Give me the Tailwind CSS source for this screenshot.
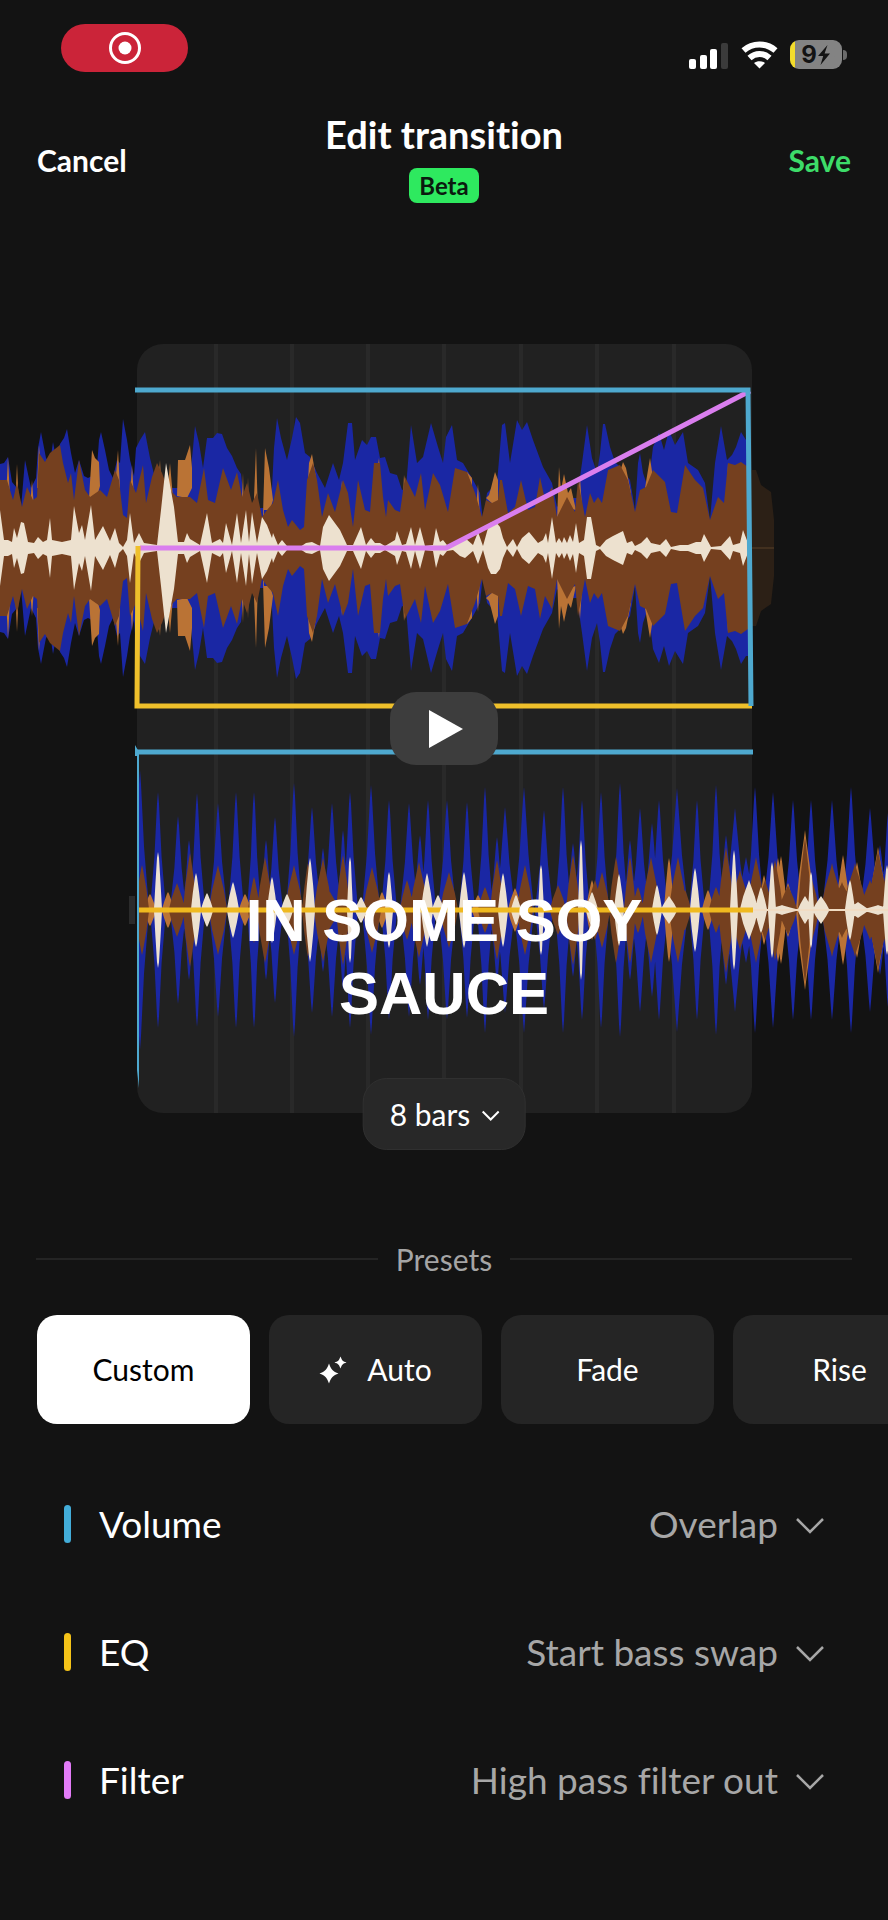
<!DOCTYPE html>
<html lang="en">
<head>
  <meta charset="UTF-8" />
  <meta name="viewport" content="width=device-width, initial-scale=1.0"/>
  <title>Edit transition</title>
  <script src="https://cdn.jsdelivr.net/npm/@tailwindcss/browser@4"></script>
</head>
<body class="min-h-screen overflow-x-hidden bg-[#131313] font-['Lato',sans-serif] text-white [font-variant-ligatures:none]">

  <!-- Status bar -->
  <div class="flex h-24 items-start justify-between pl-[61px] pr-[41px] pt-6">
    <div class="flex h-12 w-[127px] items-center justify-center rounded-full bg-[#cb2439]">
      <svg class="size-8" viewBox="0 0 32 32" fill="none">
        <circle cx="16" cy="16" r="14.5" stroke="#fff" stroke-width="3"/>
        <circle cx="16" cy="16" r="6.5" fill="#fff"/>
      </svg>
    </div>
    <div class="flex items-center gap-3 pt-4">
      <svg class="h-7 w-10" viewBox="0 0 40 28" fill="#fff">
        <rect x="0" y="18" width="7" height="10" rx="2"/>
        <rect x="11" y="14" width="7" height="14" rx="2"/>
        <rect x="21" y="8" width="7" height="20" rx="2"/>
        <rect x="32" y="2" width="7" height="26" rx="2" fill="#3b3b3b"/>
      </svg>
      <svg class="h-7 w-[37px]" viewBox="0 0 37 28" fill="none" stroke="#fff" stroke-width="6">
        <path d="M2.500 9.500C11.500 1.500 25.500 1.500 34.500 9.500"/>
        <path d="M8.500 17C14.500 11.500 22.500 11.500 28.500 17"/>
        <path d="M18.500 27.500L13 22C16.200 19.500 20.800 19.500 24 22Z" fill="#fff" stroke="none"/>
      </svg>
      <div class="flex items-center gap-px">
        <div class="flex h-[29px] w-[52px] items-center justify-center overflow-hidden rounded-[9px] bg-gradient-to-r from-[#f3dc2c] from-10% to-[#838383] to-10% font-['Inter',sans-serif] text-2xl font-bold text-[#131313]">
          9
          <svg class="h-5 w-[14px]" viewBox="0 0 12 20" fill="#131313"><path d="M9.500 0L0 11h5.200L2.500 20 12 8.500H6.600Z"/></svg>
        </div>
        <div class="h-2.5 w-1 rounded-r-full bg-[#6b6b6b]"></div>
      </div>
    </div>
  </div>

  <!-- Header -->
  <header class="grid h-32 grid-cols-[1fr_auto_1fr] items-center px-[37px] text-[30px] font-bold">
    <button class="justify-self-start">Cancel</button>
    <div class="flex flex-col items-center gap-3 pb-1.5">
      <h1 class="text-[38px] leading-[44px]">Edit transition</h1>
      <span class="rounded-lg bg-[#2ee95f] px-2.5 text-2xl leading-[35px] text-[#0b1a0f]">Beta</span>
    </div>
    <button class="justify-self-end text-[#3ddc69]">Save</button>
  </header>

  <!-- Timeline -->
  <section class="relative mt-[120px] h-[806px]">
    <svg class="h-full w-full" viewBox="0 344 888 806" preserveAspectRatio="xMidYMid slice" fill="none">
      <rect x="137" y="344" width="615" height="769" rx="26" fill="#212121"/>
      <path d="M216 344V1113M292 344V1113M368 344V1113M444 344V1113M521 344V1113M597 344V1113M674 344V1113" stroke="#292929" stroke-width="4"/>

      <!-- outgoing track -->
      <path d="M751 470L756 470 761 485 771 492 774 520V576L771 604 761 611 756 626 751 626Z" fill="#2c2016"/>
      <path d="M751 548H774" stroke="#42301f" stroke-width="2"/>
      <g id="outgoing"></g>

      <!-- incoming track -->
      <rect x="129" y="896" width="6" height="28" fill="#2b2b2b"/>
      <g id="incoming" clip-path="url(#from-start)"></g>
      <path d="M752 910H888" stroke="#f1dcc3" stroke-width="2"/>

      <!-- automation curves -->
      <path d="M140 548H446L750 391" stroke="#da7eee" stroke-width="5"/>
      <path d="M138 546L137 706H752" stroke="#efc02b" stroke-width="5"/>
      <path d="M135 390H748L751 706" stroke="#4ea9cf" stroke-width="5"/>
      <path d="M139 910H753" stroke="#efb91f" stroke-width="5"/>
      <path d="M135 752H753" stroke="#4ea9cf" stroke-width="5"/>
      <path d="M135 745V756H137V1070L139 1088V752Z" fill="#4ea9cf"/>
      <clipPath id="from-start"><rect x="139" y="750" width="749" height="320"/></clipPath>
    </svg>

    <button aria-label="Play" class="absolute left-1/2 top-[348px] flex h-[73px] w-[108px] -translate-x-1/2 items-center justify-center rounded-[26px] bg-[#3d3d3d]">
      <svg class="ml-1 h-10 w-9" viewBox="0 0 36 40" fill="#fff"><path d="M1 1L35 20 1 39Z"/></svg>
    </button>

    <p class="pointer-events-none absolute left-1/2 top-[540px] w-[420px] -translate-x-1/2 text-center font-['Liberation_Sans',Arial,sans-serif] text-[60px] font-bold leading-[73px]">IN SOME SOY SAUCE</p>

    <div class="absolute bottom-0 left-1/2 -translate-x-1/2">
      <select aria-label="Transition length" class="field-sizing-content h-[72px] appearance-none rounded-3xl border border-[#303030] bg-[#282828] pl-[26px] pr-[54px] text-[30px]">
        <option>8 bars</option>
      </select>
      <svg class="pointer-events-none absolute right-[26px] top-8 h-3 w-[18px]" viewBox="0 0 18 12" fill="none" stroke="#fff" stroke-width="2"><path d="M1 1.500L9 9.500 17 1.500"/></svg>
    </div>
  </section>

  <!-- Presets -->
  <section class="pt-[89px]">
    <div class="flex items-center gap-[18px] px-9">
      <span class="h-0.5 flex-1 bg-[#242424]"></span>
      <h2 class="text-[30px] leading-[40px] text-[#a5a5a5]">Presets</h2>
      <span class="h-0.5 flex-1 bg-[#242424]"></span>
    </div>
    <div class="mt-9 flex gap-[19px] overflow-hidden pl-[37px] text-[30px]">
      <button class="h-[109px] w-[213px] shrink-0 rounded-[20px] bg-white text-black">Custom</button>
      <button class="flex h-[109px] w-[213px] shrink-0 items-center justify-center gap-5 rounded-[20px] bg-[#252525]">
        <svg class="size-7" viewBox="0 0 28 28" fill="#fff">
          <path d="M10 7.500C12 13.500 14 15.500 19.500 17.500 14 19.500 12 21.500 10 27.500 8 21.500 6 19.500 .5 17.500 6 15.500 8 13.500 10 7.500Z"/>
          <path d="M21.500 .5C23 4.500 24 5.500 27.500 6.500 24 7.500 23 8.500 21.500 12.500 20 8.500 19 7.500 15.500 6.500 19 5.500 20 4.500 21.500 .5Z"/>
        </svg>
        Auto
      </button>
      <button class="h-[109px] w-[213px] shrink-0 rounded-[20px] bg-[#252525]">Fade</button>
      <button class="h-[109px] w-[213px] shrink-0 rounded-[20px] bg-[#252525]">Rise</button>
    </div>
  </section>

  <!-- Curve settings -->
  <section class="mt-9 pl-16 pr-[60px] text-[37px]">
    <div class="flex h-32 items-center">
      <span class="mr-7 h-[38px] w-[7px] rounded-full bg-[#43add9]"></span>
      <label for="volume">Volume</label>
      <div class="relative ml-auto">
        <select id="volume" class="field-sizing-content appearance-none pr-[50px] text-right text-[#a7a7a7]">
          <option>Overlap</option>
        </select>
        <svg class="pointer-events-none absolute right-1 top-[22px] h-4 w-7" viewBox="0 0 28 16" fill="none" stroke="#a7a7a7" stroke-width="2.500"><path d="M1 1L14 14 27 1"/></svg>
      </div>
    </div>
    <div class="flex h-32 items-center">
      <span class="mr-7 h-[38px] w-[7px] rounded-full bg-[#f5c318]"></span>
      <label for="eq">EQ</label>
      <div class="relative ml-auto">
        <select id="eq" class="field-sizing-content appearance-none pr-[50px] text-right text-[#a7a7a7]">
          <option>Start bass swap</option>
        </select>
        <svg class="pointer-events-none absolute right-1 top-[22px] h-4 w-7" viewBox="0 0 28 16" fill="none" stroke="#a7a7a7" stroke-width="2.500"><path d="M1 1L14 14 27 1"/></svg>
      </div>
    </div>
    <div class="flex h-32 items-center">
      <span class="mr-7 h-[38px] w-[7px] rounded-full bg-[#e27bf7]"></span>
      <label for="filter">Filter</label>
      <div class="relative ml-auto">
        <select id="filter" class="field-sizing-content appearance-none pr-[50px] text-right text-[#a7a7a7]">
          <option>High pass filter out</option>
        </select>
        <svg class="pointer-events-none absolute right-1 top-[22px] h-4 w-7" viewBox="0 0 28 16" fill="none" stroke="#a7a7a7" stroke-width="2.500"><path d="M1 1L14 14 27 1"/></svg>
      </div>
    </div>
  </section>

  <script>
    const COLORS = { low: "#1a27a4", mid: "#75401f", midHigh: "#ba7335", high: "#ede1cf" };
    const BANDS = ["low", "midHigh", "mid", "high"];

    // "x,height" pairs, mirrored around the centre of the track; ";" starts a new shape
    const outgoing = {
      low: "0,84 4,85 8,91 12,66 17,60 21,40 25,88 31,60 36,70 38,100 41,116 46,90 50,85 53,106 56,90 60,104 64,110 67,119 71,95 75,75 79,88 84,72 88,70 92,72 96,68 99,108 101,116 105,98 109,78 113,70 117,88 120,85 123,129 127,108 130,88 134,72 136,100 140,108 145,116 150,90 155,70 160,60 180,60 190,70 193,100 195,122 199,105 203,80 207,110 213,110 217,115 222,114 227,100 232,92 237,80 241,74 245,40 255,40 265,40 272,60 274,100 277,130 281,110 287,88 292,110 296,131 300,125 305,95 310,91 317,75 325,60 333,85 339,68 343,85 348,125 352,125 355,88 362,108 367,103 371,111 376,111 380,90 385,91 390,75 397,73 402,58 406,60 411,123 417,85 423,91 431,125 438,101 443,85 446,111 452,123 457,88 463,85 473,68 480,55 483,26 487,55 497,65 502,123 505,125 510,85 517,128 522,118 527,126 533,108 543,81 552,65 557,41 565,50 577,50 582,85 587,123 592,90 597,75 600,95 603,124 605,124 610,101 615,86 621,80 630,68 635,38 638,85 640,95 643,75 648,60 653,101 659,115 664,98 669,118 675,103 683,116 688,85 698,78 705,65 710,28 715,85 721,122 727,88 732,93 736,101 741,116 746,108 748,108",
      midHigh: "6,50 8,91 10,50;15,40 17,84 19,40;30,40 32,68 34,40;37,60 39,103 42,60;89,50 92,98 95,90 99,86 100,62 98,55 94,52;115,60 118,98 120,60;130,50 132,83 134,50;157,50 160,88 162,50;167,50 170,85 173,50;177,52 178,88 185,88 190,103 192,80 192,60 187,50;240,0 243,75 245,0;246,0 248,71 250,0;252,0 256,100 259,0;262,0 265,100 269,80 273,48 270,38 264,38;306,30 309,85 312,94 316,70 318,30;340,40 342,68 344,40;375,60 379,90 381,60;402,30 404,73 408,50;465,50 467,76 472,70 472,50;476,40 478,64 480,30;486,50 489,53 491,60 495,76 498,68 498,45 494,43;556,0 559,81 561,58 564,74 568,55 571,60 576,38 568,40;577,40 580,71 582,40;615,60 623,86 626,80 631,55 625,50;645,60 650,90 653,70 650,58;726,40 728,85 730,40",
      mid: "0,68 7,68 13,48 17,65 22,41 27,61 33,48 37,51 39,95 45,86 50,95 60,103 63,85 68,65 71,75 74,48 79,88 85,58 90,51 100,58 107,51 115,78 119,68 123,33 127,30 130,68 136,55 143,83 146,45 152,71 157,85 162,75 167,61 177,51 190,51 197,45 204,80 208,48 215,45 223,80 231,58 237,76 242,51 247,65 252,45 257,55 262,31 267,38 273,45 278,68 283,38 288,21 292,28 300,18 304,21 307,68 313,85 317,68 322,31 328,55 335,36 343,68 348,55 353,21 358,68 365,38 370,36 374,85 380,85 383,51 386,31 388,48 395,38 400,36 405,71 415,51 421,75 425,38 433,75 440,63 448,36 455,80 467,76 475,55 482,31 486,48 492,45 498,48 500,68 502,68 508,35 515,41 521,68 528,38 535,41 540,71 545,48 552,61 557,31 567,51 575,36 578,68 585,31 590,55 594,45 598,51 602,45 608,78 620,83 628,68 635,36 640,58 646,61 653,78 665,66 671,36 677,35 685,83 695,68 703,60 710,28 718,51 724,45 728,85 735,83 741,86 748,81",
      high: "0,38 4,8 8,8 12,6 14,20 17,10 21,26 24,25 28,6 34,5 38,11 43,6 47,8 50,30 52,8 62,6 71,8 74,42 79,15 82,23 85,8 91,43 95,8 103,22 110,7 115,20 119,5 123,1 127,8 130,35 134,5 139,15 144,5 157,3 161,38 166,85 174,41 178,6 184,6 187,15 190,9 200,3 207,35 212,5 220,9 223,5 226,25 232,3 237,35 241,5 246,38 249,6 252,36 257,5 262,31 267,23 272,10 273,15 278,3 282,8 287,2 300,1 306,5 312,6 320,2 323,21 329,33 340,18 347,3 353,3 361,21 366,3 371,10 375,5 380,5 385,2 395,8 397,17 402,3 406,4 411,21 415,3 420,21 425,2 433,3 436,20 440,6 443,8 447,3 453,2 460,8 465,10 473,3 478,16 483,2 488,20 491,26 496,26 500,21 503,10 507,1 513,9 517,1 522,10 529,16 538,5 543,8 546,15 548,5 552,31 556,5 559,10 562,5 564,11 567,5 570,13 573,6 576,25 579,5 584,8 587,31 591,31 596,3 600,1 606,8 613,12 623,17 627,5 632,7 635,2 641,5 647,11 651,5 660,3 666,9 671,1 680,3 688,3 696,6 701,6 704,14 711,1 721,2 730,12 733,3 740,5 743,18 748,5"
    };

    // "x,height,half width" of each transient
    const incoming = {
      low: "140,140,9 158,118,8 178,94,8 189,70,7 197,117,8 218,107,9 236,118,8 254,118,7 266,70,7 275,93,8 294,127,8 312,103,9 323,62,7 332,107,9 343,80,7 350,118,8 371,125,9 389,110,8 409,107,9 420,75,8 428,110,8 447,110,9 467,108,8 485,123,8 497,73,8 505,103,10 524,123,10 544,100,9 563,123,8 573,67,8 582,110,8 601,118,8 620,127,8 630,70,8 640,102,9 652,87,9 659,110,9 677,122,11 697,110,8 716,125,8 726,75,9 735,102,12 746,53,12 755,123,9 773,118,10 793,110,9 811,110,9 832,110,10 851,123,9 870,102,10 880,65,10 888,97,8",
      midHigh: "150,16,6 168,18,6 245,16,6 382,18,6 478,15,6 515,22,7 592,30,6 669,52,5 708,20,6 764,35,5 778,52,5 781,54,6 788,27,6 805,80,9 843,55,7 857,48,7 878,63,9",
      mid: "142,45,7 177,27,8 190,57,7 218,45,9 254,33,6 265,53,8 294,45,9 308,47,6 323,52,9 330,18,9 343,55,7 372,43,9 407,30,7 419,48,9 449,38,9 485,23,7 497,50,7 525,45,8 558,25,8 573,55,7 595,30,8 602,38,8 616,53,7 630,53,6 638,23,6 651,53,9 678,53,9 685,20,6 716,23,7 726,63,8 740,40,10 756,53,9 765,30,8 775,50,8 788,25,9 805,72,7 811,34,8 832,47,11 842,28,12 855,47,12 870,30,10 878,60,10 888,45,9",
      high: "158,58,4 196,37,5 207,17,6 233,28,6 272,33,5 287,16,6 310,52,5 350,53,3 361,13,6 389,38,4 427,37,6 438,15,6 464,38,5 503,37,5 516,15,5 541,45,3 581,70,3 592,18,6 619,36,5 657,25,5 669,14,8 695,42,5 734,60,4 749,30,9 761,23,6 772,48,4 782,5,14 805,14,7 811,38,3 821,14,8 850,30,5 858,8,10 878,5,14 887,45,4"
    };

    const parse = (data) => data.split(" ").map((p) => p.split(",").map(Number));

    function mirrored(points, mid) {
      const top = points.map(([x, h]) => `${x} ${mid - h}`);
      const bottom = points.map(([x, h]) => `${x} ${mid + h}`).reverse();
      return `M${top.concat(bottom).join("L")}Z`;
    }

    // a patch only fills its own outline, once above and once below the centre
    function patch(points, mid) {
      const above = points.map(([x, h]) => `${x} ${mid - h}`).join("L");
      const below = points.map(([x, h]) => `${x} ${mid + h}`).join("L");
      return `M${above}ZM${below}Z`;
    }

    function spike([x, h, w], mid, belly) {
      const s = w * belly;
      return mirrored([[x - w, 1], [x - s, h * 0.45], [x - 1, h * 0.9], [x, h], [x + 1, h * 0.9], [x + s, h * 0.45], [x + w, 1]], mid);
    }

    function draw(id, layers) {
      document.getElementById(id).innerHTML = layers
        .map(([color, d]) => `<path d="${d}" fill="${color}"/>`)
        .join("");
    }

    draw("outgoing", BANDS.map((band) => {
      const shape = band === "midHigh" ? patch : mirrored;
      return [COLORS[band], outgoing[band].split(";").map((part) => shape(parse(part), 548)).join("")];
    }));

    draw("incoming", BANDS.map((band) => {
      const belly = band === "low" ? 0.45 : 0.65;
      return [COLORS[band], parse(incoming[band]).map((p) => spike(p, 910, belly)).join("")];
    }));
  </script>
</body>
</html>
